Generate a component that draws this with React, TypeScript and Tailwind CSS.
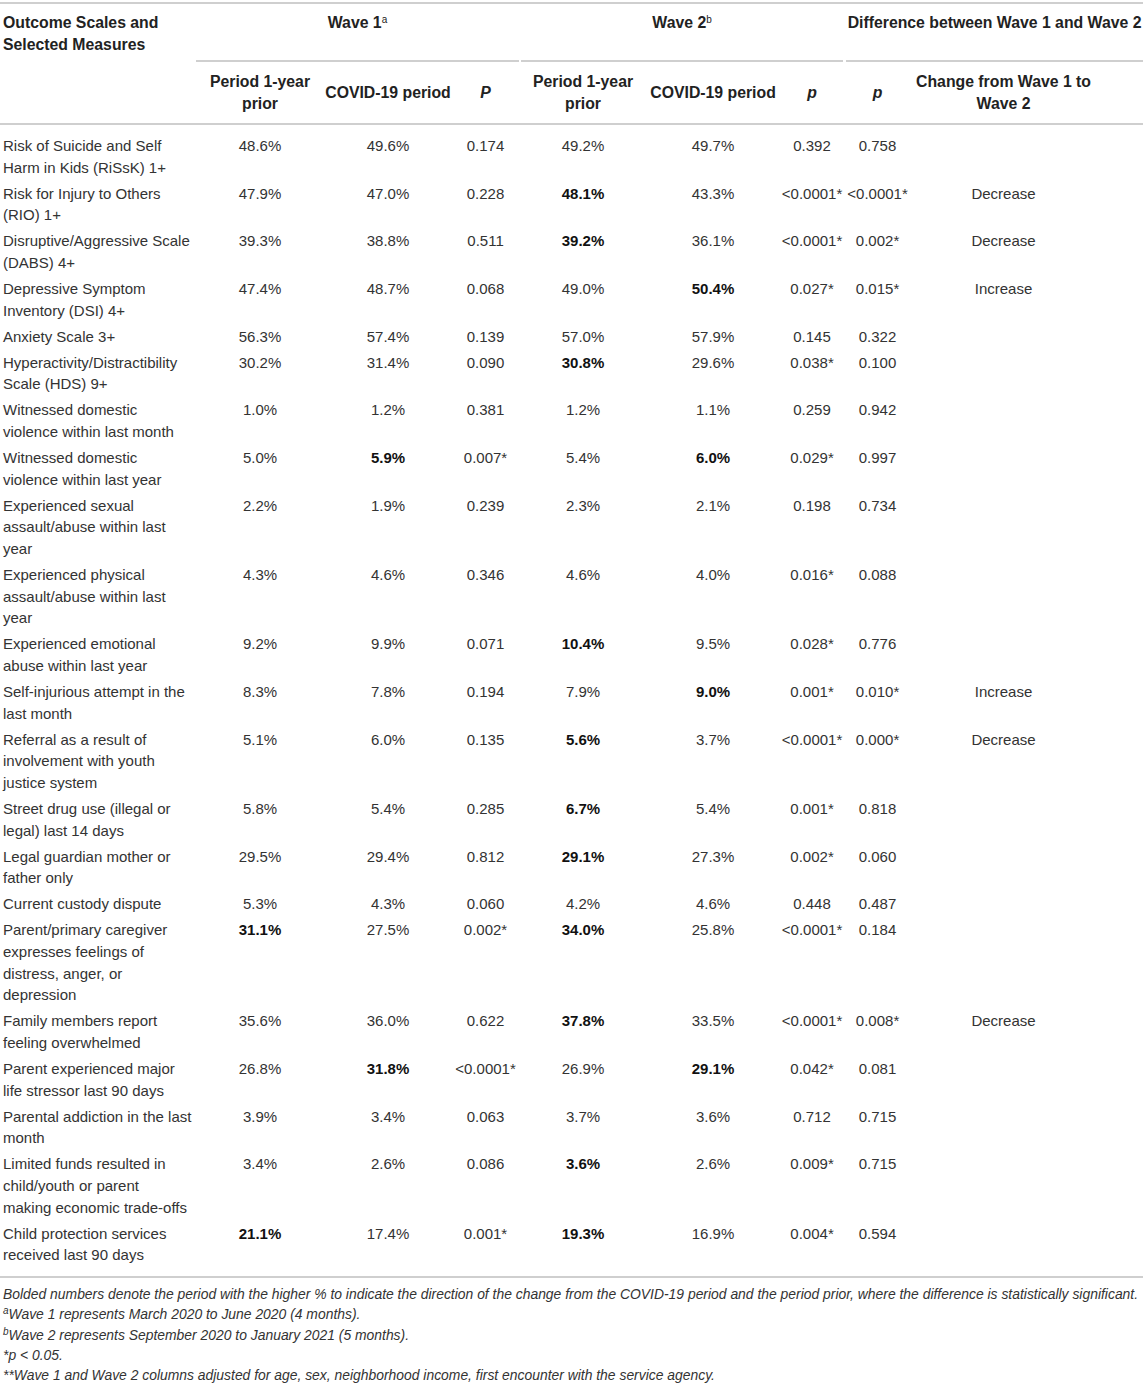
import React from "react";

type Row = { label: string; cells: string[]; change?: string };

// "**" prefix = bold value (the period with the higher %), "|" = forced line break
const rows: Row[] = [
  { label: "Risk of Suicide and Self Harm in Kids (RiSsK) 1+", cells: ["48.6%", "49.6%", "0.174", "49.2%", "49.7%", "0.392", "0.758"] },
  { label: "Risk for Injury to Others (RIO) 1+", cells: ["47.9%", "47.0%", "0.228", "**48.1%", "43.3%", "<0.0001*", "<0.0001*"], change: "Decrease" },
  { label: "Disruptive/Aggressive Scale (DABS) 4+", cells: ["39.3%", "38.8%", "0.511", "**39.2%", "36.1%", "<0.0001*", "0.002*"], change: "Decrease" },
  { label: "Depressive Symptom Inventory (DSI) 4+", cells: ["47.4%", "48.7%", "0.068", "49.0%", "**50.4%", "0.027*", "0.015*"], change: "Increase" },
  { label: "Anxiety Scale 3+", cells: ["56.3%", "57.4%", "0.139", "57.0%", "57.9%", "0.145", "0.322"] },
  { label: "Hyperactivity/Distractibility Scale (HDS) 9+", cells: ["30.2%", "31.4%", "0.090", "**30.8%", "29.6%", "0.038*", "0.100"] },
  { label: "Witnessed domestic violence within last month", cells: ["1.0%", "1.2%", "0.381", "1.2%", "1.1%", "0.259", "0.942"] },
  { label: "Witnessed domestic violence within last year", cells: ["5.0%", "**5.9%", "0.007*", "5.4%", "**6.0%", "0.029*", "0.997"] },
  { label: "Experienced sexual assault/abuse within last year", cells: ["2.2%", "1.9%", "0.239", "2.3%", "2.1%", "0.198", "0.734"] },
  { label: "Experienced physical assault/abuse within last year", cells: ["4.3%", "4.6%", "0.346", "4.6%", "4.0%", "0.016*", "0.088"] },
  { label: "Experienced emotional abuse within last year", cells: ["9.2%", "9.9%", "0.071", "**10.4%", "9.5%", "0.028*", "0.776"] },
  { label: "Self-injurious attempt in the last month", cells: ["8.3%", "7.8%", "0.194", "7.9%", "**9.0%", "0.001*", "0.010*"], change: "Increase" },
  { label: "Referral as a result of involvement with youth justice system", cells: ["5.1%", "6.0%", "0.135", "**5.6%", "3.7%", "<0.0001*", "0.000*"], change: "Decrease" },
  { label: "Street drug use (illegal or legal) last 14 days", cells: ["5.8%", "5.4%", "0.285", "**6.7%", "5.4%", "0.001*", "0.818"] },
  { label: "Legal guardian mother or father only", cells: ["29.5%", "29.4%", "0.812", "**29.1%", "27.3%", "0.002*", "0.060"] },
  { label: "Current custody dispute", cells: ["5.3%", "4.3%", "0.060", "4.2%", "4.6%", "0.448", "0.487"] },
  { label: "Parent/primary caregiver expresses feelings of distress, anger, or depression", cells: ["**31.1%", "27.5%", "0.002*", "**34.0%", "25.8%", "<0.0001*", "0.184"] },
  { label: "Family members report feeling overwhelmed", cells: ["35.6%", "36.0%", "0.622", "**37.8%", "33.5%", "<0.0001*", "0.008*"], change: "Decrease" },
  { label: "Parent experienced major life stressor last 90 days", cells: ["26.8%", "**31.8%", "<0.0001*", "26.9%", "**29.1%", "0.042*", "0.081"] },
  { label: "Parental addiction in the last month", cells: ["3.9%", "3.4%", "0.063", "3.7%", "3.6%", "0.712", "0.715"] },
  { label: "Limited funds resulted in child/youth or parent|making economic trade-offs", cells: ["3.4%", "2.6%", "0.086", "**3.6%", "2.6%", "0.009*", "0.715"] },
  { label: "Child protection services received last 90 days", cells: ["**21.1%", "17.4%", "0.001*", "**19.3%", "16.9%", "0.004*", "0.594"] },
];

function Value({ v }: { v: string }) {
  if (v.startsWith("**")) {
    return <span className="font-bold text-[#111]">{v.slice(2)}</span>;
  }
  return <>{v}</>;
}

function Label({ text }: { text: string }) {
  const parts = text.split("|");
  return (
    <>
      {parts.map((p, i) => (
        <React.Fragment key={i}>
          {i > 0 && <br />}
          {p}
        </React.Fragment>
      ))}
    </>
  );
}

export default function App() {
  return (
    <div
      className="w-[1143px] bg-white pt-[2px] text-[#333]"
      style={{ fontFamily: '"Liberation Sans", Arial, Helvetica, sans-serif' }}
    >
      <table className="w-[1143px] table-fixed border-collapse text-[15px] leading-[21.67px]">
        <colgroup>
          <col className="w-[196px]" />
          <col className="w-[128px]" />
          <col className="w-[128px]" />
          <col className="w-[67px]" />
          <col className="w-[128px]" />
          <col className="w-[132px]" />
          <col className="w-[66px]" />
          <col className="w-[65px]" />
          <col className="w-[233px]" />
        </colgroup>
        <thead className="text-[15.8px] leading-[21.5px] font-bold text-[#222]">
          <tr className="border-t-2 border-[#cfcfcf]">
            <th rowSpan={2} className="border-b-2 border-[#cfcfcf] pl-[3px] pr-1 pt-[8px] text-left align-top font-bold">
              Outcome Scales and Selected Measures
            </th>
            <th colSpan={3} className="p-0 align-top font-bold">
              <div className="h-[58px] border-b-2 border-[#cfcfcf] pt-[8px] text-center">
                Wave 1<sup className="text-[10px] font-normal">a</sup>
              </div>
            </th>
            <th colSpan={3} className="p-0 align-top font-bold">
              <div className="ml-[2px] mr-[2px] h-[58px] border-b-2 border-[#cfcfcf] pt-[8px] text-center">
                Wave 2<sup className="text-[10px] font-normal">b</sup>
              </div>
            </th>
            <th colSpan={2} className="p-0 align-top font-bold">
              <div className="ml-[1px] h-[58px] whitespace-nowrap border-b-2 border-[#cfcfcf] pt-[8px] text-center">
                Difference between Wave 1 and Wave 2
              </div>
            </th>
          </tr>
          <tr className="border-b-2 border-[#cfcfcf]">
            <th className="px-1 py-[9px] text-center align-middle font-bold">Period 1-year prior</th>
            <th className="px-0 py-[9px] text-center align-middle font-bold">COVID-19 period</th>
            <th className="px-1 py-[9px] text-center align-middle font-bold italic">P</th>
            <th className="px-1 py-[9px] text-center align-middle font-bold">Period 1-year prior</th>
            <th className="px-0 py-[9px] text-center align-middle font-bold">COVID-19 period</th>
            <th className="px-1 py-[9px] text-center align-middle font-bold italic">p</th>
            <th className="px-1 py-[9px] text-center align-middle font-bold italic">p</th>
            <th className="py-[9px] pl-[3px] pr-[49px] text-center align-middle font-bold">Change from Wave 1 to Wave 2</th>
          </tr>
        </thead>
        <tbody>
          <tr className="h-[9px]">
            <td colSpan={9} />
          </tr>
          {rows.map((r) => (
            <tr key={r.label} className="align-top">
              <td className="py-[2.17px] pl-[3px] pr-0 text-left">
                <Label text={r.label} />
              </td>
              {r.cells.map((c, i) => (
                <td key={i} className="whitespace-nowrap px-0 py-[2.17px] text-center">
                  <Value v={c} />
                </td>
              ))}
              <td className="py-[2.17px] pl-[3px] pr-[49px] text-center">{r.change ?? ""}</td>
            </tr>
          ))}
          <tr className="h-[9px] border-b-2 border-[#cfcfcf]">
            <td colSpan={9} />
          </tr>
        </tbody>
      </table>
      <div className="pl-[3px] pt-[6px] text-[13.9px] italic leading-[20.3px] text-[#333]">
        <p>
          Bolded numbers denote the period with the higher % to indicate the direction of the change from the COVID-19 period and the period prior, where the difference is statistically significant.
        </p>
        <p>
          <sup className="text-[10px]">a</sup>Wave 1 represents March 2020 to June 2020 (4 months).
        </p>
        <p>
          <sup className="text-[10px]">b</sup>Wave 2 represents September 2020 to January 2021 (5 months).
        </p>
        <p>*p &lt; 0.05.</p>
        <p>**Wave 1 and Wave 2 columns adjusted for age, sex, neighborhood income, first encounter with the service agency.</p>
      </div>
    </div>
  );
}
